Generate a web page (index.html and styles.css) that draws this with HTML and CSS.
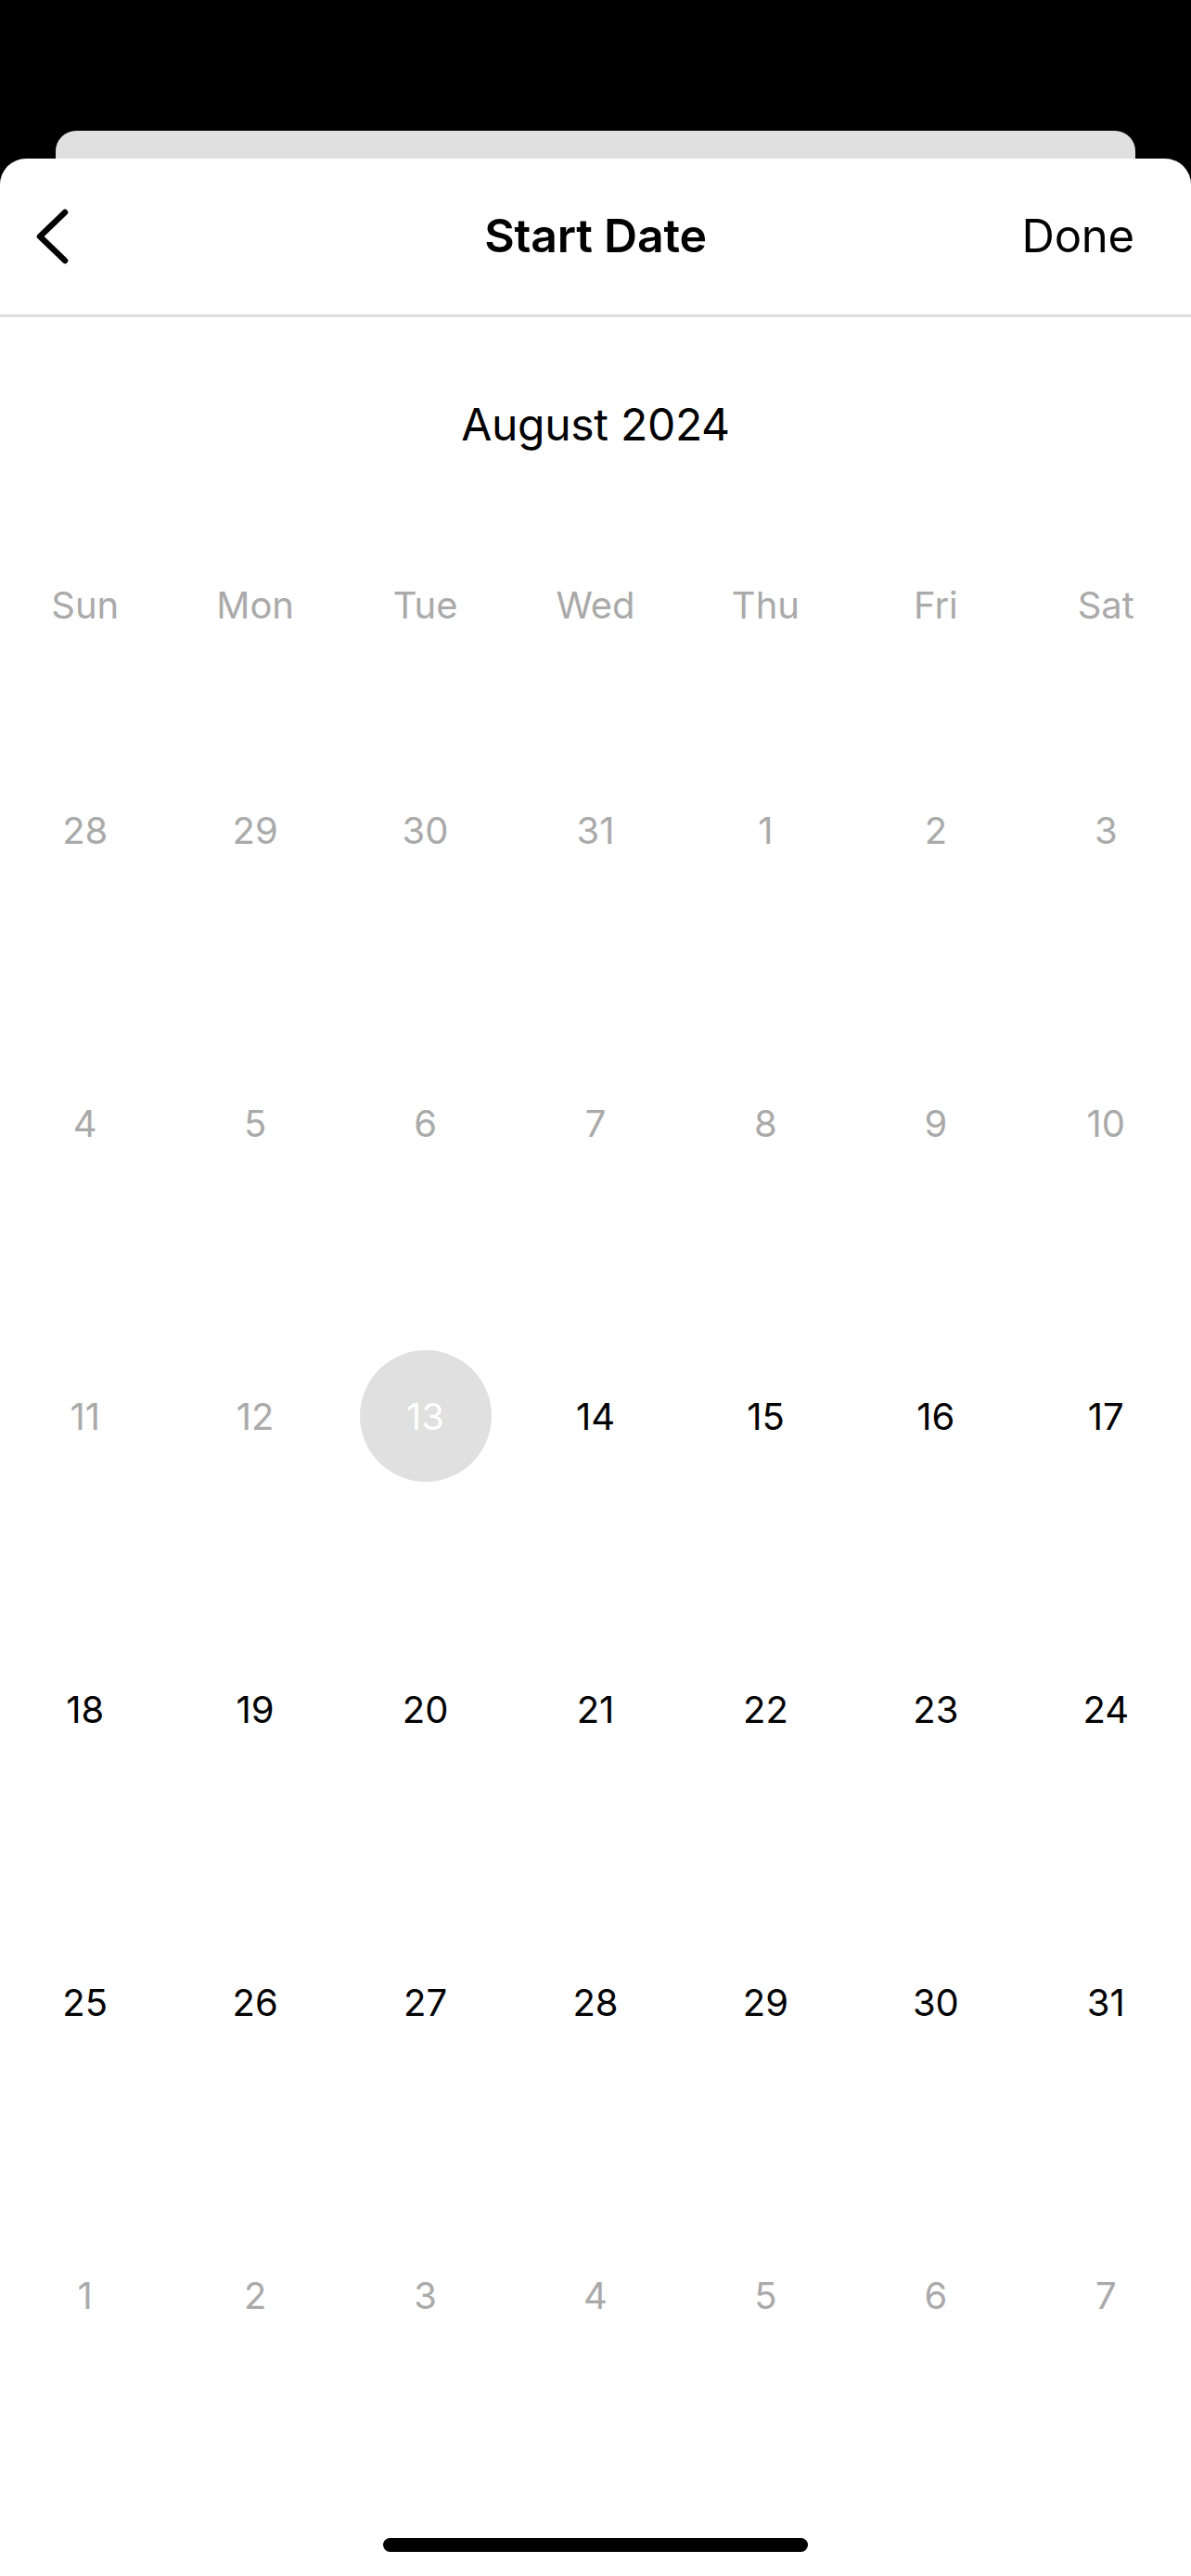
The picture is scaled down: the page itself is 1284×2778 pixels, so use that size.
FILE: index.html
```html
<!DOCTYPE html>
<html lang="en">
<head>
<meta charset="utf-8">
<title>Start Date</title>
<link rel="stylesheet" href="styles.css">
</head>
<body>
<div class="backcard"></div>
<div class="sheet">
  <header class="nav">
    <div class="nav-left">
      <svg class="chev" width="36" height="60" viewBox="0 0 36 60" aria-hidden="true">
        <path d="M32 4 L5 30 L32 56" fill="none" stroke="#000" stroke-width="6.5" stroke-linecap="round" stroke-linejoin="round"/>
      </svg>
    </div>
    <div class="nav-title">Start Date</div>
    <div class="nav-right">Done</div>
  </header>
  <div class="month">August 2024</div>
  <div class="weekdays">
    <div>Sun</div><div>Mon</div><div>Tue</div><div>Wed</div><div>Thu</div><div>Fri</div><div>Sat</div>
  </div>
  <div class="days">
    <div class="day muted">28</div><div class="day muted">29</div><div class="day muted">30</div><div class="day muted">31</div><div class="day muted">1</div><div class="day muted">2</div><div class="day muted">3</div>
    <div class="day muted">4</div><div class="day muted">5</div><div class="day muted">6</div><div class="day muted">7</div><div class="day muted">8</div><div class="day muted">9</div><div class="day muted">10</div>
    <div class="day muted">11</div><div class="day muted">12</div><div class="day today"><span>13</span></div><div class="day">14</div><div class="day">15</div><div class="day">16</div><div class="day">17</div>
    <div class="day">18</div><div class="day">19</div><div class="day">20</div><div class="day">21</div><div class="day">22</div><div class="day">23</div><div class="day">24</div>
    <div class="day">25</div><div class="day">26</div><div class="day">27</div><div class="day">28</div><div class="day">29</div><div class="day">30</div><div class="day">31</div>
    <div class="day muted">1</div><div class="day muted">2</div><div class="day muted">3</div><div class="day muted">4</div><div class="day muted">5</div><div class="day muted">6</div><div class="day muted">7</div>
  </div>
  <div class="home-wrap"><div class="home"></div></div>
</div>
</body>
</html>
```

FILE: styles.css
```css
* { box-sizing: border-box; }
html, body {
  margin: 0;
  padding: 0;
  background: #000;
}
body {
  width: 1284px;
  height: 2778px;
  overflow: hidden;
  font-family: Inter, "Liberation Sans", Arial, sans-serif;
  color: #000;
}
.backcard {
  margin: 141px 60px 0;
  height: 30px;
  background: #e0e0e0;
  border-radius: 22px 22px 0 0;
}
.sheet {
  background: #fff;
  border-radius: 28px 28px 0 0;
  height: 2607px;
  display: flex;
  flex-direction: column;
}
.nav {
  height: 171px;
  border-bottom: 3px solid #dcdcdc;
  display: grid;
  grid-template-columns: 1fr auto 1fr;
  align-items: center;
}
.nav-left {
  padding-left: 38px;
  display: flex;
  align-items: center;
}
.chev { display: block; }
.nav-title {
  font-size: 50px;
  font-weight: 600;
  letter-spacing: -0.2px;
  padding-bottom: 3px;
}
.nav-right {
  justify-self: end;
  padding-right: 61px;
  padding-bottom: 2px;
  font-size: 49px;
  font-weight: 400;
  letter-spacing: -0.2px;
}
.month {
  height: 232px;
  display: flex;
  align-items: center;
  justify-content: center;
  font-size: 48px;
  letter-spacing: -0.3px;
  padding-bottom: 2px;
}
.weekdays {
  height: 158px;
  display: grid;
  grid-template-columns: repeat(7, 1fr);
  align-items: center;
  text-align: center;
  font-size: 40px;
  color: #aaaaaa;
  padding-bottom: 2px;
}
.days {
  margin-top: 5px;
  display: grid;
  grid-template-columns: repeat(7, 1fr);
  grid-auto-rows: 316px;
  font-size: 40px;
}
.day {
  display: flex;
  align-items: center;
  justify-content: center;
  color: #000;
}
.day.muted { color: #aaaaaa; }
.day.today span {
  width: 142px;
  height: 142px;
  border-radius: 50%;
  background: #e0e0e0;
  color: #fff;
  display: flex;
  align-items: center;
  justify-content: center;
}
.home-wrap {
  margin-top: auto;
  padding-bottom: 26px;
  display: flex;
  justify-content: center;
}
.home {
  width: 458px;
  height: 15px;
  border-radius: 8px;
  background: #000;
}
```
